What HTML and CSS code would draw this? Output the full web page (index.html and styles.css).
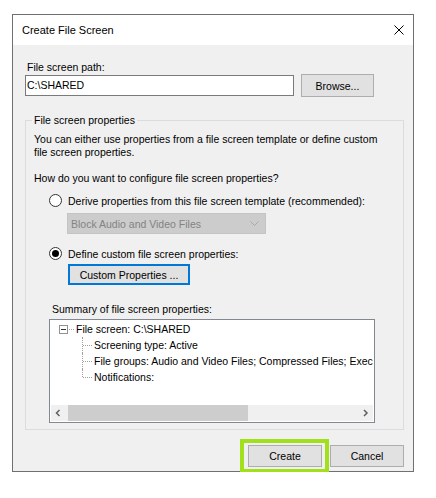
FILE: index.html
```html
<!DOCTYPE html>
<html>
<head>
<meta charset="utf-8">
<link rel="stylesheet" href="styles.css">
</head>
<body>
<div class="dialog">
  <div class="titlebar">
    <span class="title">Create File Screen</span>
    <svg class="close" width="10" height="10" viewBox="0 0 10 10"><path d="M0.5 0.5 L9.5 9.5 M9.5 0.5 L0.5 9.5" stroke="#000" stroke-width="1" fill="none"/></svg>
  </div>
  <div class="body">
    <div class="label path-label">File screen path:</div>
    <div class="path-row">
      <div class="textbox">C:\SHARED</div>
      <div class="btn browse">Browse...</div>
    </div>
    <div class="group">
      <span class="legend">File screen properties</span>
      <div class="desc">You can either use properties from a file screen template or define custom<br>file screen properties.</div>
      <div class="question">How do you want to configure file screen properties?</div>
      <div class="radio-row first"><span class="radio"></span><span>Derive properties from this file screen template (recommended):</span></div>
      <div class="combo"><span>Block Audio and Video Files</span>
        <svg width="9" height="5" viewBox="0 0 9 5"><path d="M0.5 0.5 L4.5 4.5 L8.5 0.5" stroke="#a8a8a8" fill="none"/></svg>
      </div>
      <div class="radio-row second"><span class="radio checked"></span><span>Define custom file screen properties:</span></div>
      <div class="btn custom">Custom Properties ...</div>
      <div class="summary-label">Summary of file screen properties:</div>
      <div class="tree">
        <div class="tree-content">
          <div class="node root"><span class="expander"></span><span class="hconn"></span><span class="node-text">File screen: C:\SHARED</span></div>
          <div class="children">
            <div class="node child">Screening type: Active</div>
            <div class="node child">File groups: Audio and Video Files; Compressed Files; Executable Files</div>
            <div class="node child last">Notifications:</div>
          </div>
        </div>
        <div class="hscroll">
          <span class="arrow"><svg width="17" height="16" viewBox="0 0 17 16"><path d="M8.5 5 L5.5 8 L8.5 11" stroke="#606060" stroke-width="1.5" fill="none"/></svg></span>
          <span class="track"><span class="thumb"></span></span>
          <span class="arrow"><svg width="17" height="16" viewBox="0 0 17 16"><path d="M8 5 L11 8 L8 11" stroke="#606060" stroke-width="1.5" fill="none"/></svg></span>
        </div>
      </div>
    </div>
    <div class="footer">
      <div class="btn create">Create</div>
      <div class="btn cancel">Cancel</div>
    </div>
  </div>
</div>
</body>
</html>
```
FILE: styles.css
```css
* { box-sizing: border-box; }
html, body { margin: 0; padding: 0; background: #ffffff; }
body {
  font-family: "Liberation Sans", Arial, sans-serif;
  font-size: 10.5px;
  color: #000;
}
.dialog {
  margin: 14px 0 0 12px;
  width: 402px;
  height: 458px;
  border: 1px solid #707070;
  display: flex;
  flex-direction: column;
}
.titlebar {
  height: 30px;
  background: #fff;
  display: flex;
  align-items: center;
  justify-content: space-between;
  padding: 0 9px 0 9px;
}
.title { font-size: 11px; }
.close { display: block; margin-top: -1px; }
.body {
  flex: 1;
  background: #f0f0f0;
  padding: 15px 9px 4px 12px;
  display: flex;
  flex-direction: column;
}
.label { line-height: 14px; }
.path-label { margin-left: 2px; }
.path-row {
  display: flex;
  align-items: center;
  height: 23px;
}
.textbox {
  width: 269px;
  height: 21px;
  border: 1px solid #7a7a7a;
  background: #fff;
  line-height: 19px;
  padding-left: 1px;
}
.btn {
  background: #e1e1e1;
  border: 1px solid #adadad;
  display: flex;
  align-items: center;
  justify-content: center;
  white-space: nowrap;
}
.browse {
  margin-left: 7px;
  width: 73px;
  height: 23px;
}
.group {
  position: relative;
  margin-top: 23px;
  height: 310px;
  border: 1px solid #dcdcdc;
  padding: 12px 0 6px 8px;
  display: flex;
  flex-direction: column;
  align-items: flex-start;
}
.legend {
  position: absolute;
  top: -8px;
  left: 6px;
  padding: 0 2px;
  background: #f0f0f0;
  line-height: 15px;
}
.desc { line-height: 13px; white-space: nowrap; }
.question { margin-top: 12px; line-height: 15px; }
.radio-row {
  display: flex;
  align-items: center;
  height: 15px;
  margin-left: 15px;
  white-space: nowrap;
}
.radio-row.first { margin-top: 7px; }
.radio-row.second { margin-top: 12px; }
.radio {
  width: 13px;
  height: 13px;
  border: 1px solid #333;
  border-radius: 50%;
  background: #fff;
  margin-right: 6px;
  position: relative;
  flex: none;
}
.radio.checked::after {
  content: "";
  position: absolute;
  left: 2px;
  top: 2px;
  width: 7px;
  height: 7px;
  border-radius: 50%;
  background: #000;
}
.combo {
  margin-top: 5px;
  margin-left: 33px;
  width: 199px;
  height: 21px;
  background: #cccccc;
  border: 1px solid #c4c4c4;
  color: #838383;
  display: flex;
  align-items: center;
  justify-content: space-between;
  padding: 0 6px 0 3px;
}
.combo svg { display: block; }
.custom {
  margin-top: 3px;
  margin-left: 34px;
  width: 122px;
  height: 21px;
  border: 2px solid #0078d7;
}
.summary-label {
  margin-top: 17px;
  margin-left: 18px;
  line-height: 15px;
}
.tree {
  margin-top: 2px;
  margin-left: 15px;
  width: 326px;
  height: 104px;
  border: 1px solid #828790;
  background: #fff;
  padding: 1px;
  display: flex;
  flex-direction: column;
}
.tree-content {
  flex: 1;
  overflow: hidden;
  white-space: nowrap;
}
.node { height: 16px; line-height: 16px; }
.root {
  display: flex;
  align-items: center;
  padding-left: 8px;
}
.expander {
  width: 9px;
  height: 9px;
  border: 1px solid #919191;
  position: relative;
  flex: none;
}
.expander::after {
  content: "";
  position: absolute;
  left: 1px;
  top: 3px;
  width: 5px;
  height: 1px;
  background: #333;
}
.hconn {
  width: 5px;
  border-top: 1px dotted #a0a0a0;
  margin: 0 2px 0 1px;
  flex: none;
}
.children { padding-left: 43px; }
.child { position: relative; }
.child::before {
  content: "";
  position: absolute;
  left: -12px;
  top: 0;
  bottom: 0;
  border-left: 1px dotted #a0a0a0;
}
.child.last::before { bottom: 8px; }
.child::after {
  content: "";
  position: absolute;
  left: -11px;
  width: 9px;
  top: 8px;
  border-top: 1px dotted #a0a0a0;
}
.hscroll {
  height: 16px;
  background: #f0f0f0;
  display: flex;
  flex: none;
}
.arrow { width: 17px; height: 16px; flex: none; }
.arrow svg { display: block; }
.track { flex: 1; display: flex; }
.thumb { width: 180px; background: #cdcdcd; }
.footer {
  margin-top: 15px;
  display: flex;
  justify-content: flex-end;
  gap: 8px;
}
.create, .cancel { width: 74px; height: 22px; }
.create { position: relative; }
.create::after {
  content: "";
  position: absolute;
  left: -9px;
  right: -8px;
  top: -7px;
  bottom: -7px;
  border: 4px solid #a2e01b;
}
```
